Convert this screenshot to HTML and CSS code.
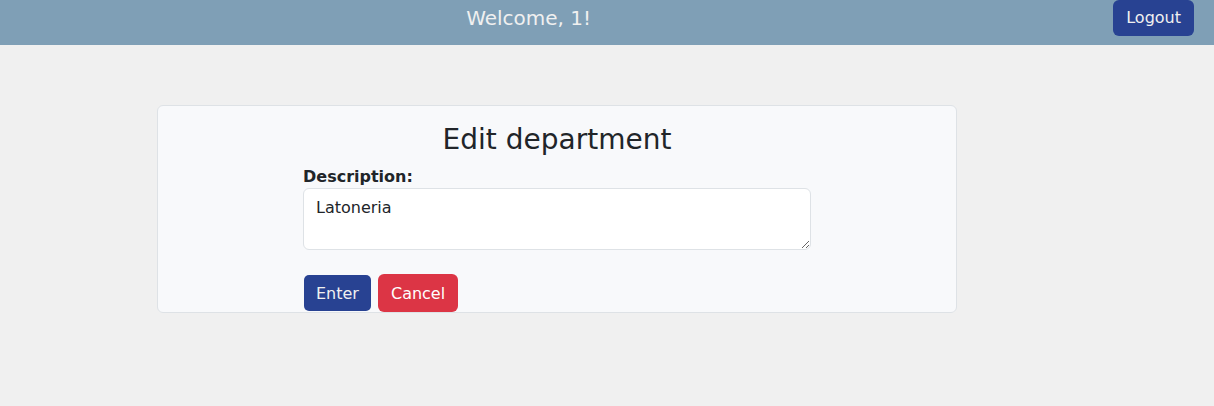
FILE: index.html
```html
<!DOCTYPE html>
<html lang="en">
<head>
<meta charset="utf-8">
<meta name="viewport" content="width=device-width, initial-scale=1">
<title>Edit department</title>
<link rel="stylesheet" href="styles.css">
</head>
<body>
<header class="topbar">
  <p class="welcome">Welcome, 1!</p>
  <button class="btn btn-primary btn-logout" type="button">Logout</button>
</header>
<main class="page">
  <section class="card">
    <h1 class="title">Edit department</h1>
    <form class="form">
      <label class="label" for="description">Description:</label>
      <textarea class="field" id="description" name="description" spellcheck="false">Latoneria</textarea>
      <div class="actions">
        <button class="btn btn-primary btn-outlined" type="submit">Enter</button>
        <button class="btn btn-danger" type="button">Cancel</button>
      </div>
    </form>
  </section>
</main>
</body>
</html>
```
FILE: styles.css
```css
* {
  box-sizing: border-box;
}

body {
  margin: 0;
  background: #f0f0f0;
  color: #212529;
  font: 16px/24px "DejaVu Sans", Verdana, sans-serif;
}

.topbar {
  display: grid;
  grid-template-columns: 1fr auto;
  align-items: start;
  padding: 0 20px 9px 0;
  background: #7f9fb6;
}

.welcome {
  margin: 0;
  padding-right: 56px;
  text-align: center;
  color: #f0f0f0;
  font-size: 20px;
  line-height: 36px;
}

.btn {
  padding: 7px 12px 5px;
  border: 1px solid transparent;
  border-radius: 6px;
  color: #fff;
  font: inherit;
  cursor: pointer;
}

.btn-primary {
  background: #284292;
  color: #f0f0f0;
}

.btn-logout {
  padding: 5px 12px;
}

.btn-outlined {
  background-clip: padding-box;
}

.btn-danger {
  background: #dc3545;
}

.page {
  padding: 60px 257px 0 157px;
}

.card {
  max-width: 800px;
  padding-top: 17px;
  border: 1px solid #dee2e6;
  border-radius: 6px;
  background: #f8f9fb;
}

.title {
  margin: 0 0 8px;
  text-align: center;
  font-size: 28px;
  font-weight: 400;
  line-height: 34px;
}

.form {
  display: flex;
  flex-direction: column;
  width: 508px;
  max-width: 100%;
  margin: 0 auto;
}

.label {
  font-weight: 700;
  line-height: 23px;
}

.field {
  display: block;
  width: 100%;
  height: 62px;
  padding: 7px 12px;
  border: 1px solid #dee2e6;
  border-radius: 6px;
  background: #fff;
  color: inherit;
  font: inherit;
  resize: vertical;
}

.actions {
  display: flex;
  gap: 6px;
  margin-top: 24px;
}
```
